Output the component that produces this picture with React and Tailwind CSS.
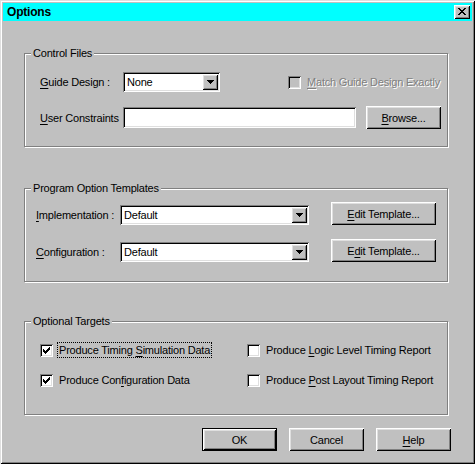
import React from 'react';

const raised = 'shadow-[inset_1px_1px_0_#fff,inset_-1px_-1px_0_#000,inset_2px_2px_0_#dfdfdf,inset_-2px_-2px_0_#808080]';
const sunken = 'shadow-[inset_1px_1px_0_#808080,inset_-1px_-1px_0_#fff,inset_2px_2px_0_#000,inset_-2px_-2px_0_#dfdfdf]';

// mnemonic letter
function Mn({ children }) {
  return <span className="underline underline-offset-[2px] decoration-1">{children}</span>;
}

function Button({ children, isDefault, className = '' }) {
  return (
    <button
      className={`flex items-center justify-center bg-[#c0c0c0] ${raised} ${isDefault ? 'border border-black' : ''} ${className}`}
    >
      {children}
    </button>
  );
}

function Arrow() {
  return (
    <svg width="7" height="4" viewBox="0 0 7 4" shapeRendering="crispEdges">
      <path d="M0 0h7v1H0z M1 1h5v1H1z M2 2h3v1H2z M3 3h1v1H3z" fill="#000" />
    </svg>
  );
}

function Combo({ value, className = '' }) {
  return (
    <div className={`h-[20px] bg-white flex items-center ${sunken} ${className}`}>
      <span className="pl-[4px] flex-1">{value}</span>
      <div className={`mr-[2px] w-[16px] h-[16px] bg-[#c0c0c0] flex items-center justify-center ${raised}`}>
        <Arrow />
      </div>
    </div>
  );
}

function Check({ checked, disabled }) {
  return (
    <span className={`block w-[13px] h-[13px] shrink-0 ${disabled ? 'bg-[#c0c0c0]' : 'bg-white'} ${sunken}`}>
      {checked && (
        <svg width="13" height="13" viewBox="0 0 13 13" shapeRendering="crispEdges">
          <path
            d="M9 3h1v1H9z M8 4h2v1H8z M3 5h1v1H3z M7 5h3v1H7z M3 6h2v1H3z M6 6h3v1H6z M3 7h5v1H3z M4 8h3v1H4z M5 9h1v1H5z"
            fill="#000"
          />
        </svg>
      )}
    </span>
  );
}

function CheckItem({ checked, focused, children, className = '' }) {
  return (
    <div className={`flex items-center gap-[4px] ${className}`}>
      <Check checked={checked} />
      <span className={`px-[1px] leading-[14px] border ${focused ? 'border-dotted border-black' : 'border-transparent'}`}>
        {children}
      </span>
    </div>
  );
}

function Group({ title, className = '', children }) {
  return (
    <div className={`relative w-[424px] h-[94px] border border-[#808080] shadow-[1px_1px_0_#fff,inset_1px_1px_0_#fff] ${className}`}>
      <span className="absolute top-[-8px] left-[6px] px-[2px] bg-[#c0c0c0] leading-[14px]">{title}</span>
      {children}
    </div>
  );
}

export default function App() {
  return (
    <div className="relative w-[475px] h-[464px] bg-[#c0c0c0] p-[3px] flex flex-col font-['Liberation_Sans',Arial,sans-serif] text-[11px] tracking-[-0.2px] leading-[14px] text-black shadow-[inset_1px_1px_0_#dfdfdf,inset_-1px_-1px_0_#000,inset_2px_2px_0_#fff,inset_-2px_-2px_0_#808080]">
      {/* title bar */}
      <div className="h-[18px] bg-[#00ffff] flex items-center justify-between pl-[4px] pr-[2px]">
        <span className="font-bold text-[12px] tracking-[-0.2px] leading-[18px]">Options</span>
        <div className={`w-[16px] h-[14px] bg-[#c0c0c0] pl-[4px] pt-[3px] ${raised}`}>
          <svg width="8" height="7" viewBox="0 0 8 7" shapeRendering="crispEdges" className="block">
            <path
              d="M0 0h2v1H0z M6 0h2v1H6z M1 1h2v1H1z M5 1h2v1H5z M2 2h4v1H2z M3 3h2v1H3z M2 4h4v1H2z M1 5h2v1H1z M5 5h2v1H5z M0 6h2v1H0z M6 6h2v1H6z"
              fill="#000"
            />
          </svg>
        </div>
      </div>

      <div className="ml-[21px] mt-[32px] flex flex-col">
        <Group title="Control Files" className="pt-[18px]">
          <div className="flex items-center h-[20px] pl-[15px]">
            <span className="w-[83px]"><Mn>G</Mn>uide Design :</span>
            <Combo value="None" className="w-[97px]" />
            <div className="ml-[68px] flex items-center gap-[6px]">
              <Check disabled />
              <span className="text-[#808080] [text-shadow:1px_1px_0_#fff]"><Mn>M</Mn>atch Guide Design Exactly</span>
            </div>
          </div>
          <div className="flex items-center h-[23px] mt-[14px] pl-[15px]">
            <span className="w-[83px]"><Mn>U</Mn>ser Constraints</span>
            <div className={`w-[233px] h-[21px] bg-white ${sunken}`} />
            <Button className="ml-[10px] w-[75px] h-[23px]"><Mn>B</Mn>rowse...</Button>
          </div>
        </Group>

        <Group title="Program Option Templates" className="mt-[41px] pt-[13px]">
          <div className="flex items-start h-[23px] pl-[11px]">
            <span className="w-[84px] h-[20px] mt-[3px] flex items-center"><span><Mn>I</Mn>mplementation :</span></span>
            <Combo value="Default" className="w-[189px] mt-[3px]" />
            <Button className="ml-[22px] w-[105px] h-[23px]"><Mn>E</Mn>dit Template...</Button>
          </div>
          <div className="flex items-start h-[23px] mt-[14px] pl-[11px]">
            <span className="w-[84px] h-[20px] mt-[3px] flex items-center"><span><Mn>C</Mn>onfiguration :</span></span>
            <Combo value="Default" className="w-[189px] mt-[3px]" />
            <Button className="ml-[22px] w-[105px] h-[23px]">E<Mn>d</Mn>it Template...</Button>
          </div>
        </Group>

        <Group title="Optional Targets" className="mt-[39px] pt-[20px]">
          <div className="flex h-[16px] pl-[15px]">
            <CheckItem checked focused className="w-[207px]">
              Produce Timing <Mn>S</Mn>imulation Data
            </CheckItem>
            <CheckItem>
              Produce <Mn>L</Mn>ogic Level Timing Report
            </CheckItem>
          </div>
          <div className="flex h-[16px] mt-[14px] pl-[15px]">
            <CheckItem checked className="w-[207px]">
              Produce Con<Mn>f</Mn>iguration Data
            </CheckItem>
            <CheckItem>
              Produce <Mn>P</Mn>ost Layout Timing Report
            </CheckItem>
          </div>
        </Group>
      </div>

      <div className="flex gap-[12px] pl-[199px] mt-[13px]">
        <Button isDefault className="w-[75px] h-[23px]">OK</Button>
        <Button className="w-[75px] h-[23px]">Cancel</Button>
        <Button className="w-[75px] h-[23px]"><Mn>H</Mn>elp</Button>
      </div>
    </div>
  );
}
